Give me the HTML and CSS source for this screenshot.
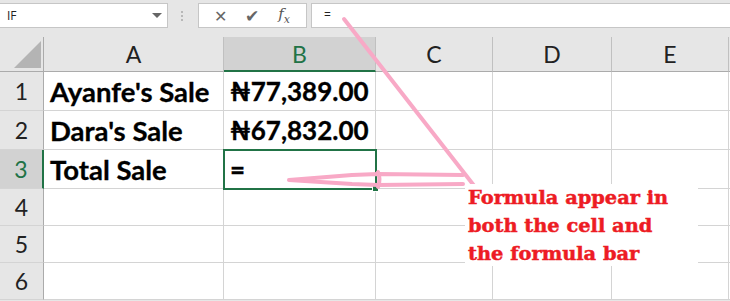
FILE: index.html
```html
<!DOCTYPE html>
<html lang="en">

<head>
  <meta charset="UTF-8">
  <meta name="viewport" content="width=device-width, initial-scale=1.0">
  <title>Total Sale</title>
  <link rel="stylesheet" href="styles.css">
</head>

<body>
  <div class="window">
    <div class="formula-row">
      <div class="name-box">
        <span>IF</span>
        <span class="caret"></span>
      </div>
      <div class="grip"></div>
      <div class="fx-buttons">
        <span class="fx-btn">&#x2715;</span>
        <span class="fx-btn check">&#x2714;</span>
        <span class="fx-btn fx"><i>f</i><sub>x</sub></span>
      </div>
      <div class="formula-bar">=</div>
    </div>

    <div class="sheet">
      <div class="corner"><span class="corner-tri"></span></div>
      <div class="col-head">A</div>
      <div class="col-head selected">B</div>
      <div class="col-head">C</div>
      <div class="col-head">D</div>
      <div class="col-head">E</div>
      <div class="col-head"></div>

      <div class="row-head">1</div>
      <div class="cell">Ayanfe's Sale</div>
      <div class="cell money">&#x20A6;77,389.00</div>
      <div class="cell"></div>
      <div class="cell"></div>
      <div class="cell"></div>
      <div class="cell"></div>

      <div class="row-head">2</div>
      <div class="cell">Dara's Sale</div>
      <div class="cell money">&#x20A6;67,832.00</div>
      <div class="cell"></div>
      <div class="cell"></div>
      <div class="cell"></div>
      <div class="cell"></div>

      <div class="row-head selected">3</div>
      <div class="cell">Total Sale</div>
      <div class="cell active">=</div>
      <div class="cell"></div>
      <div class="cell"></div>
      <div class="cell"></div>
      <div class="cell"></div>

      <div class="row-head">4</div>
      <div class="cell"></div>
      <div class="cell"></div>
      <div class="cell"></div>
      <div class="cell"></div>
      <div class="cell"></div>
      <div class="cell"></div>

      <div class="row-head">5</div>
      <div class="cell"></div>
      <div class="cell"></div>
      <div class="cell"></div>
      <div class="cell"></div>
      <div class="cell"></div>
      <div class="cell"></div>

      <div class="row-head">6</div>
      <div class="cell"></div>
      <div class="cell"></div>
      <div class="cell"></div>
      <div class="cell"></div>
      <div class="cell"></div>
      <div class="cell"></div>
    </div>

    <!-- hand drawn callout on top of the sheet -->
    <svg class="ink" width="730" height="301" viewBox="0 0 730 301">
      <path d="M344 19 L479 192" />
      <path d="M463 175 L378 174 L352 175 L289 180 L352 184 L378 185 L463 184" />
      <path d="M378 172 Q381 179 378 187" />
    </svg>
    <div class="note">Formula appear in<br>both the cell and<br>the formula bar</div>
  </div>
</body>

</html>
```

FILE: styles.css
```css
body {
  margin: 0;
  padding: 0;
  background-color: #fff;
}

.window {
  position: relative;
  width: 730px;
  height: 301px;
  overflow: hidden;
  background-color: #e6e6e6;
}

/* formula bar row */
.formula-row {
  display: flex;
  align-items: flex-start;
  height: 37px;
  padding-top: 3px;
  box-sizing: border-box;
  font-family: 'Open Sans', sans-serif;
}

.name-box,
.fx-buttons,
.formula-bar {
  height: 25px;
  box-sizing: border-box;
  background-color: #fff;
  border: 1px solid #c6c6c6;
}

.name-box {
  width: 169px;
  margin-left: -1px;
  display: flex;
  align-items: center;
  justify-content: space-between;
  padding: 0 5px 0 7px;
  font-size: 12px;
  color: #222;
}

.caret {
  width: 0;
  height: 0;
  border-left: 5px solid transparent;
  border-right: 5px solid transparent;
  border-top: 5px solid #666;
}

.grip {
  width: 2px;
  height: 12px;
  margin: 7px 15px 0 13px;
  background-image: radial-gradient(circle, #b8b8b8 1px, transparent 1.2px);
  background-size: 2px 4px;
}

.fx-buttons {
  width: 109px;
  display: flex;
  align-items: center;
  justify-content: space-around;
  padding: 0 6px;
}

.fx-btn {
  width: 24px;
  text-align: center;
  font-size: 16px;
  color: #666;
}

.fx-btn.check {
  font-size: 17px;
}

.fx {
  font-family: 'DejaVu Serif', serif;
  font-size: 15px;
  color: #555;
}

.fx sub {
  font-size: 11px;
  font-style: italic;
}

.formula-bar {
  flex: 1;
  margin-left: 4px;
  margin-right: -2px;
  padding-left: 12px;
  font-size: 12px;
  line-height: 22px;
  color: #222;
}

/* worksheet grid */
.sheet {
  display: grid;
  grid-template-columns: 44px 180px 152px 117px 119px 117px 1fr;
  grid-template-rows: 35px 39px 39px 39px 37px 37px 37px;
  background-color: #fff;
  font-family: 'Lato', sans-serif;
}

.corner,
.col-head,
.row-head {
  background-color: #e6e6e6;
  color: #222;
  font-size: 23px;
  display: flex;
  align-items: center;
  justify-content: center;
  box-sizing: border-box;
}

.corner {
  position: relative;
  border-right: 1px solid #ababab;
  border-bottom: 1px solid #ababab;
}

.corner-tri {
  position: absolute;
  right: 2px;
  bottom: 3px;
  width: 0;
  height: 0;
  border-left: 27px solid transparent;
  border-bottom: 27px solid #b4b4b4;
}

.col-head {
  border-right: 1px solid #c0c0c0;
  border-bottom: 1px solid #ababab;
}

.col-head.selected {
  background-color: #d2d2d2;
  color: #217346;
  border-bottom: 2px solid #217346;
}

.row-head {
  border-right: 1px solid #ababab;
  border-bottom: 1px solid #d4d4d4;
}

.row-head.selected {
  background-color: #d2d2d2;
  color: #217346;
  border-right: 2px solid #217346;
}

.cell {
  box-sizing: border-box;
  border-right: 1px solid #d4d4d4;
  border-bottom: 1px solid #d4d4d4;
  display: flex;
  align-items: center;
  padding: 0 6px;
  font-size: 27.5px;
  font-weight: 700;
  color: #000;
  white-space: nowrap;
  -webkit-text-stroke: 0.3px #000;
}

.cell.money {
  font-size: 26px;
}

.cell.active {
  position: relative;
  outline: 2px solid #217346;
  outline-offset: -1px;
  font-size: 26px;
}

.cell.active::after {
  content: "";
  position: absolute;
  right: -4px;
  bottom: -4px;
  width: 5px;
  height: 5px;
  background-color: #217346;
  border: 1px solid #fff;
}

/* annotation */
.ink {
  position: absolute;
  top: 0;
  left: 0;
  pointer-events: none;
}

.ink path {
  fill: none;
  stroke: #f8a9c6;
  stroke-width: 4;
  stroke-linecap: round;
  stroke-linejoin: round;
}

.note {
  position: absolute;
  left: 465px;
  top: 184px;
  width: 233px;
  height: 82px;
  box-sizing: border-box;
  padding: 0 0 0 3px;
  background-color: #fff;
  font-family: 'DejaVu Serif', serif;
  font-weight: 700;
  font-size: 19.4px;
  line-height: 28px;
  color: #ed1c24;
  white-space: nowrap;
  -webkit-text-stroke: 0.5px #ed1c24;
}
```
